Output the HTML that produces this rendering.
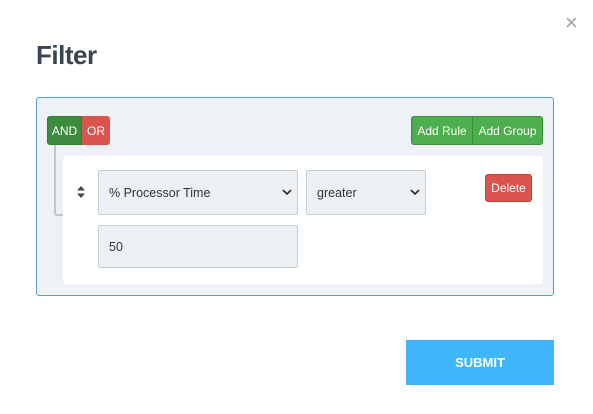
<!DOCTYPE html><html><head><style>
body{margin:0;width:593px;height:414px;background:#fff;font-family:"Liberation Sans",sans-serif;position:relative;overflow:hidden}
.a{position:absolute;box-sizing:border-box}
.btn{color:#fff;font-size:12px;display:flex;align-items:center;justify-content:center}
.sel{background:#edf0f3;border:1px solid #c6ced6;border-radius:2px;font-size:12.5px;color:#333;padding-left:10px;display:flex;align-items:center}
</style></head><body>
<div class="a" style="left:565px;top:10px;font-size:22px;color:#9aa3ab">×</div>
<div class="a" style="left:36px;top:40px;font-size:26px;font-weight:bold;color:#3b4550;letter-spacing:-0.5px">Filter</div>
<div class="a" style="left:36px;top:97px;width:518px;height:199px;background:#eef1f5;border:1px solid #5a9fd4;border-radius:3px"></div>
<div class="a" style="left:54px;top:145px;width:10px;height:71px;border-left:2px solid #c3c7cc;border-bottom:2px solid #c3c7cc;border-bottom-left-radius:3px"></div>
<div class="a btn" style="left:47px;top:116px;width:35px;height:29px;background:#3d8c3d;border:1px solid #357a35;border-radius:3px 0 0 3px">AND</div>
<div class="a btn" style="left:82px;top:116px;width:28px;height:29px;background:#d9534f;border-radius:0 3px 3px 0">OR</div>
<div class="a btn" style="left:411px;top:116px;width:62px;height:29px;background:#4cae4c;border:1px solid #3d8c3d;border-radius:3px 0 0 3px">Add Rule</div>
<div class="a btn" style="left:473px;top:116px;width:70px;height:29px;background:#4cae4c;border:1px solid #3d8c3d;border-left:none;border-radius:0 3px 3px 0">Add Group</div>
<div class="a" style="left:63px;top:156px;width:480px;height:128px;background:#fff;border-radius:4px"></div>
<svg class="a" style="left:77px;top:186px" width="8" height="12"><path d="M4 0L8 4.5H0Z M4 12L8 7.5H0Z" fill="#444"/></svg>
<div class="a sel" style="left:98px;top:170px;width:200px;height:45px">% Processor Time</div>
<svg class="a" style="left:282px;top:189px" width="10" height="7"><path d="M1 1L5 5L9 1" stroke="#333" stroke-width="1.8" fill="none"/></svg>
<div class="a sel" style="left:306px;top:170px;width:120px;height:45px">greater</div>
<svg class="a" style="left:410px;top:189px" width="10" height="7"><path d="M1 1L5 5L9 1" stroke="#333" stroke-width="1.8" fill="none"/></svg>
<div class="a btn" style="left:485px;top:174px;width:47px;height:28px;background:#d9534f;border:1px solid #c9403c;border-radius:3px">Delete</div>
<div class="a sel" style="left:98px;top:225px;width:200px;height:43px">50</div>
<div class="a btn" style="left:406px;top:340px;width:148px;height:45px;background:#3fb5fa;font-size:13px;font-weight:bold;border-radius:1px">SUBMIT</div>
</body></html>
